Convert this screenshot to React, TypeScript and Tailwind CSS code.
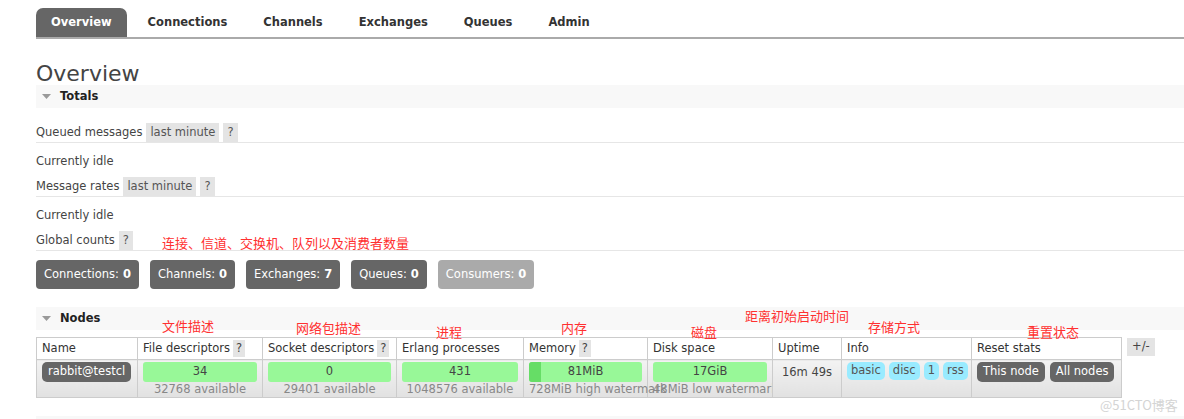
const tabs = ["Overview", "Connections", "Channels", "Exchanges", "Queues", "Admin"];

function SectionHeader({ title }: { title: string }) {
  return (
    <div className="flex h-[23px] items-center gap-[9px] bg-[#f8f8f8] pl-[6px]">
      <svg width={9} height={5} viewBox="0 0 9 5">
        <path d="M0 0H9L4.5 5Z" fill="#9a9a9a" />
      </svg>
      <span className="font-bold text-[#222]">{title}</span>
    </div>
  );
}

function Badge({ children }: { children: React.ReactNode }) {
  return (
    <span className="flex h-full items-center bg-[#e4e4e4] px-[4px] text-[#555]">
      {children}
    </span>
  );
}

function HeadHint({ label }: { label: string }) {
  return (
    <div className="flex items-center gap-[3px] whitespace-nowrap">
      {label}
      <span className="flex h-[17px] items-center bg-[#e4e4e4] px-[3px] text-[#444]">?</span>
    </div>
  );
}

function Count({ label, value, muted }: { label: string; value: number; muted?: boolean }) {
  return (
    <div
      className={`flex h-[29px] items-center rounded-[4px] px-[8px] text-white ${
        muted ? "bg-[#aaaaaa]" : "bg-[#666666]"
      }`}
    >
      {label}: <b className="ml-[4px]">{value}</b>
    </div>
  );
}

function Bar({ value, sub }: { value: string; sub: string }) {
  return (
    <div>
      <div className="flex h-[20px] items-center justify-center rounded-[3px] bg-[#98f898] text-[#444]">
        {value}
      </div>
      <div className="mt-[1px] whitespace-nowrap text-center leading-[12px] text-[#888]">{sub}</div>
    </div>
  );
}

function Pill({ children, className }: { children: React.ReactNode; className: string }) {
  return (
    <span className={`flex h-[20px] items-center rounded-[5px] px-[6px] ${className}`}>{children}</span>
  );
}

function Tag({ children }: { children: React.ReactNode }) {
  return (
    <span className="flex h-[18px] items-center rounded-[5px] bg-[#99ebff] px-[4px] text-[#555]">
      {children}
    </span>
  );
}

export default function App() {
  const th =
    "h-[22px] whitespace-nowrap border border-[#cccccc] bg-white px-[5px] text-left font-normal text-[#333]";
  const td =
    "h-[38px] border border-[#cccccc] bg-linear-to-b from-[#f3f3f3] to-[#e1e1e1] px-[5px] pt-[2px] align-top";
  const note = "absolute text-[13px] leading-none text-[#ff3030] font-['Noto_Sans_CJK_SC',sans-serif]";

  return (
    <div className="relative h-[419px] w-[1184px] overflow-hidden bg-white pl-[36px] font-['DejaVu_Sans',Verdana,sans-serif] text-[11.5px] text-[#444]">
      <nav className="flex gap-[6px] border-b-2 border-[#aaaaaa] pt-[8px]">
        {tabs.map((t, i) => (
          <div
            key={t}
            className={`flex h-[29px] items-center px-[15px] text-[11.5px] font-bold ${
              i === 0 ? "rounded-t-[7px] bg-[#666666] text-white" : "text-[#333]"
            }`}
          >
            {t}
          </div>
        ))}
      </nav>

      <h1 className="mt-[24px] h-[22px] text-[22px] leading-[22px] text-[#444]">Overview</h1>

      <SectionHeader title="Totals" />

      <div className="mt-[15px] flex h-[20px] items-center gap-[4px] border-b border-[#e6e6e6]">
        <span>Queued messages</span>
        <Badge>last minute</Badge>
        <Badge>?</Badge>
      </div>
      <div className="mt-[9px] h-[19px] leading-[19px]">Currently idle</div>
      <div className="mt-[6px] flex h-[20px] items-center gap-[4px] border-b border-[#e6e6e6]">
        <span>Message rates</span>
        <Badge>last minute</Badge>
        <Badge>?</Badge>
      </div>
      <div className="mt-[9px] h-[19px] leading-[19px]">Currently idle</div>
      <div className="mt-[6px] flex h-[20px] items-center gap-[4px] border-b border-[#e6e6e6]">
        <span>Global counts</span>
        <Badge>?</Badge>
      </div>

      <div className="mt-[9px] flex gap-[11px]">
        <Count label="Connections" value={0} />
        <Count label="Channels" value={0} />
        <Count label="Exchanges" value={7} />
        <Count label="Queues" value={0} />
        <Count label="Consumers" value={0} muted />
      </div>

      <div className="mt-[18px]">
        <SectionHeader title="Nodes" />
      </div>

      <div className="mt-[7px] flex items-start">
        <table className="w-[1085px] table-fixed border-collapse">
          <colgroup>
            <col className="w-[101px]" />
            <col className="w-[125px]" />
            <col className="w-[134px]" />
            <col className="w-[127px]" />
            <col className="w-[124px]" />
            <col className="w-[125px]" />
            <col className="w-[69px]" />
            <col className="w-[130px]" />
            <col className="w-[150px]" />
          </colgroup>
          <thead>
            <tr>
              <th className={th}>Name</th>
              <th className={th}>
                <HeadHint label="File descriptors" />
              </th>
              <th className={th}>
                <HeadHint label="Socket descriptors" />
              </th>
              <th className={th}>Erlang processes</th>
              <th className={th}>
                <HeadHint label="Memory" />
              </th>
              <th className={th}>Disk space</th>
              <th className={th}>Uptime</th>
              <th className={th}>Info</th>
              <th className={th}>Reset stats</th>
            </tr>
          </thead>
          <tbody>
            <tr>
              <td className={td}>
                <div className="flex">
                  <Pill className="bg-[#666666] text-white">rabbit@testcl</Pill>
                </div>
              </td>
              <td className={td}>
                <Bar value="34" sub="32768 available" />
              </td>
              <td className={td}>
                <Bar value="0" sub="29401 available" />
              </td>
              <td className={td}>
                <Bar value="431" sub="1048576 available" />
              </td>
              <td className={td}>
                <div>
                  <div className="relative flex h-[20px] items-center justify-center rounded-[3px] bg-[#98f898] text-[#444]">
                    <div className="absolute left-0 top-0 h-full w-[12px] rounded-l-[3px] bg-[#66dd66]" />
                    <span className="relative">81MiB</span>
                  </div>
                  <div className="mt-[1px] whitespace-nowrap leading-[12px] text-[#888]">728MiB high watermark</div>
                </div>
              </td>
              <td className={`${td} overflow-hidden`}>
                <div>
                  <div className="flex h-[20px] items-center justify-center rounded-[3px] bg-[#98f898] text-[#444]">
                    17GiB
                  </div>
                  <div className="mt-[1px] whitespace-nowrap leading-[12px] text-[#888]">48MiB low watermark</div>
                </div>
              </td>
              <td className={`${td} text-center leading-[20px] text-[#444]`}>16m 49s</td>
              <td className={td}>
                <div className="flex gap-[4px]">
                  <Tag>basic</Tag>
                  <Tag>disc</Tag>
                  <Tag>1</Tag>
                  <Tag>rss</Tag>
                </div>
              </td>
              <td className={td}>
                <div className="flex gap-[5px]">
                  <Pill className="bg-[#666666] text-white">This node</Pill>
                  <Pill className="bg-[#666666] text-white">All nodes</Pill>
                </div>
              </td>
            </tr>
          </tbody>
        </table>
        <div className="ml-[5px] mt-[1px] flex h-[18px] items-center bg-[#e4e4e4] px-[5px] text-[#444]">+/-</div>
      </div>

      <div className="mt-[18px] h-[23px] bg-[#f8f8f8]" />

      {/* red annotations drawn over the page */}
      <span className={`${note} left-[162px] top-[236px]`}>连接、信道、交换机、队列以及消费者数量</span>
      <span className={`${note} left-[162px] top-[319px]`}>文件描述</span>
      <span className={`${note} left-[296px] top-[321px]`}>网络包描述</span>
      <span className={`${note} left-[436px] top-[325px]`}>进程</span>
      <span className={`${note} left-[561px] top-[321px]`}>内存</span>
      <span className={`${note} left-[691px] top-[325px]`}>磁盘</span>
      <span className={`${note} left-[745px] top-[309px]`}>距离初始启动时间</span>
      <span className={`${note} left-[868px] top-[320px]`}>存储方式</span>
      <span className={`${note} left-[1027px] top-[325px]`}>重置状态</span>

      <span className="absolute left-[1100px] top-[398px] text-[13px] leading-none text-[#d4d4d4] font-['Noto_Sans_CJK_SC',sans-serif]">
        @51CTO博客
      </span>
    </div>
  );
}
